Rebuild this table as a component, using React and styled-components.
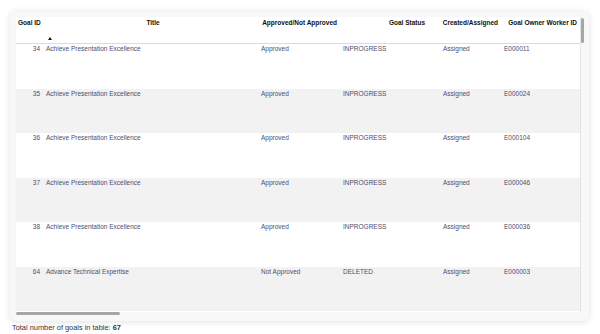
import React from 'react';
import styled, { createGlobalStyle } from 'styled-components';

const GlobalStyle = createGlobalStyle`
    body {
        margin: 0;
        background: #ffffff;
        font-family: "Liberation Sans", Arial, sans-serif;
    }
`;

const COLUMNS = '28px 213px 82px 100px 61px 81px 1fr';

const Page = styled.div`
    padding: 11px 0 0 10px;
`;

const Card = styled.section`
    width: 579px;
    box-sizing: border-box;
    padding: 6px 4px 5px 6px;
    background: #f7f8fa;
    border-radius: 6px;
    box-shadow: 0 1px 6px rgba(0, 0, 0, 0.12);
`;

const Frame = styled.div`
    display: grid;
    grid-template-columns: 565px 4px;
    grid-template-rows: 295px 4px;
`;

const Scroller = styled.div`
    overflow: hidden;
    background: #ffffff;
    border-right: 1px solid #e4e4e4;
`;

const VTrack = styled.div`
    padding-top: 1px;
`;

const HTrack = styled.div`
    padding-top: 0;
`;

const Thumb = styled.div`
    width: ${p => p.$w}px;
    height: ${p => p.$h}px;
    background: #a6a6a6;
    border-radius: 2px;
`;

const Table = styled.div`
    width: 3000px;
`;

const HeaderRow = styled.div`
    display: grid;
    grid-template-columns: ${COLUMNS};
    height: 27px;
    background: #ffffff;
    border-bottom: 1px solid #dcdcdc;
    box-sizing: border-box;
`;

const HeaderCell = styled.div`
    display: flex;
    flex-direction: column;
    justify-content: space-between;
    padding: 2px ${p => p.$right || 2}px 1px ${p => p.$left || 2}px;
    font-size: 6.5px;
    line-height: 8px;
    font-weight: bold;
    color: #111111;
    white-space: nowrap;
    text-align: ${p => p.$align || 'left'};
`;

const SortArrow = styled.span`
    align-self: flex-start;
    margin-left: -3px;
    margin-bottom: 2px;
    width: 0;
    height: 0;
    border-left: 2.5px solid transparent;
    border-right: 2.5px solid transparent;
    border-bottom: 3px solid #111111;
`;

const Row = styled.div`
    display: grid;
    grid-template-columns: ${COLUMNS};
    height: 44.5px;
    background: ${p => (p.$striped ? '#f2f2f2' : '#ffffff')};
`;

const Cell = styled.div`
    padding: 1px 4px 0 ${p => p.$left || 4}px;
    font-size: 6.5px;
    line-height: 8px;
    color: #4d4d6e;
    white-space: nowrap;
    text-align: ${p => p.$align || 'left'};
`;

const Footer = styled.p`
    margin: 2px 0 0 2px;
    font-size: 7.4px;
    line-height: 9px;
    color: #333333;
`;

const goals = [
    { id: 34, title: 'Achieve Presentation Excellence', approved: 'Approved', status: 'INPROGRESS', created: 'Assigned', owner: 'E000011' },
    { id: 35, title: 'Achieve Presentation Excellence', approved: 'Approved', status: 'INPROGRESS', created: 'Assigned', owner: 'E000024' },
    { id: 36, title: 'Achieve Presentation Excellence', approved: 'Approved', status: 'INPROGRESS', created: 'Assigned', owner: 'E000104' },
    { id: 37, title: 'Achieve Presentation Excellence', approved: 'Approved', status: 'INPROGRESS', created: 'Assigned', owner: 'E000046' },
    { id: 38, title: 'Achieve Presentation Excellence', approved: 'Approved', status: 'INPROGRESS', created: 'Assigned', owner: 'E000036' },
    { id: 64, title: 'Advance Technical Expertise', approved: 'Not Approved', status: 'DELETED', created: 'Assigned', owner: 'E000003' },
];

const TOTAL = 67;

export default function App() {
    return (
        <Page>
            <GlobalStyle />
            <Card>
                <Frame>
                    <Scroller>
                        <Table>
                            <HeaderRow>
                                <HeaderCell>Goal ID</HeaderCell>
                                <HeaderCell $align="center" $left={7}>
                                    Title
                                    <SortArrow />
                                </HeaderCell>
                                <HeaderCell $align="right">Approved/Not Approved</HeaderCell>
                                <HeaderCell $align="right" $right={14}>Goal Status</HeaderCell>
                                <HeaderCell $align="right">Created/Assigned</HeaderCell>
                                <HeaderCell $align="right" $right={4}>Goal Owner Worker ID</HeaderCell>
                                <HeaderCell />
                            </HeaderRow>
                            {goals.map((g, i) => (
                                <Row key={g.id} $striped={i % 2 === 1}>
                                    <Cell $align="right">{g.id}</Cell>
                                    <Cell $left={2}>{g.title}</Cell>
                                    <Cell>{g.approved}</Cell>
                                    <Cell>{g.status}</Cell>
                                    <Cell>{g.created}</Cell>
                                    <Cell>{g.owner}</Cell>
                                    <Cell />
                                </Row>
                            ))}
                        </Table>
                    </Scroller>
                    <VTrack>
                        <Thumb $w={3} $h={25} />
                    </VTrack>
                    <HTrack>
                        <Thumb $w={104} $h={3} />
                    </HTrack>
                </Frame>
            </Card>
            <Footer>
                Total number of goals in table: <b>{TOTAL}</b>
            </Footer>
        </Page>
    );
}
